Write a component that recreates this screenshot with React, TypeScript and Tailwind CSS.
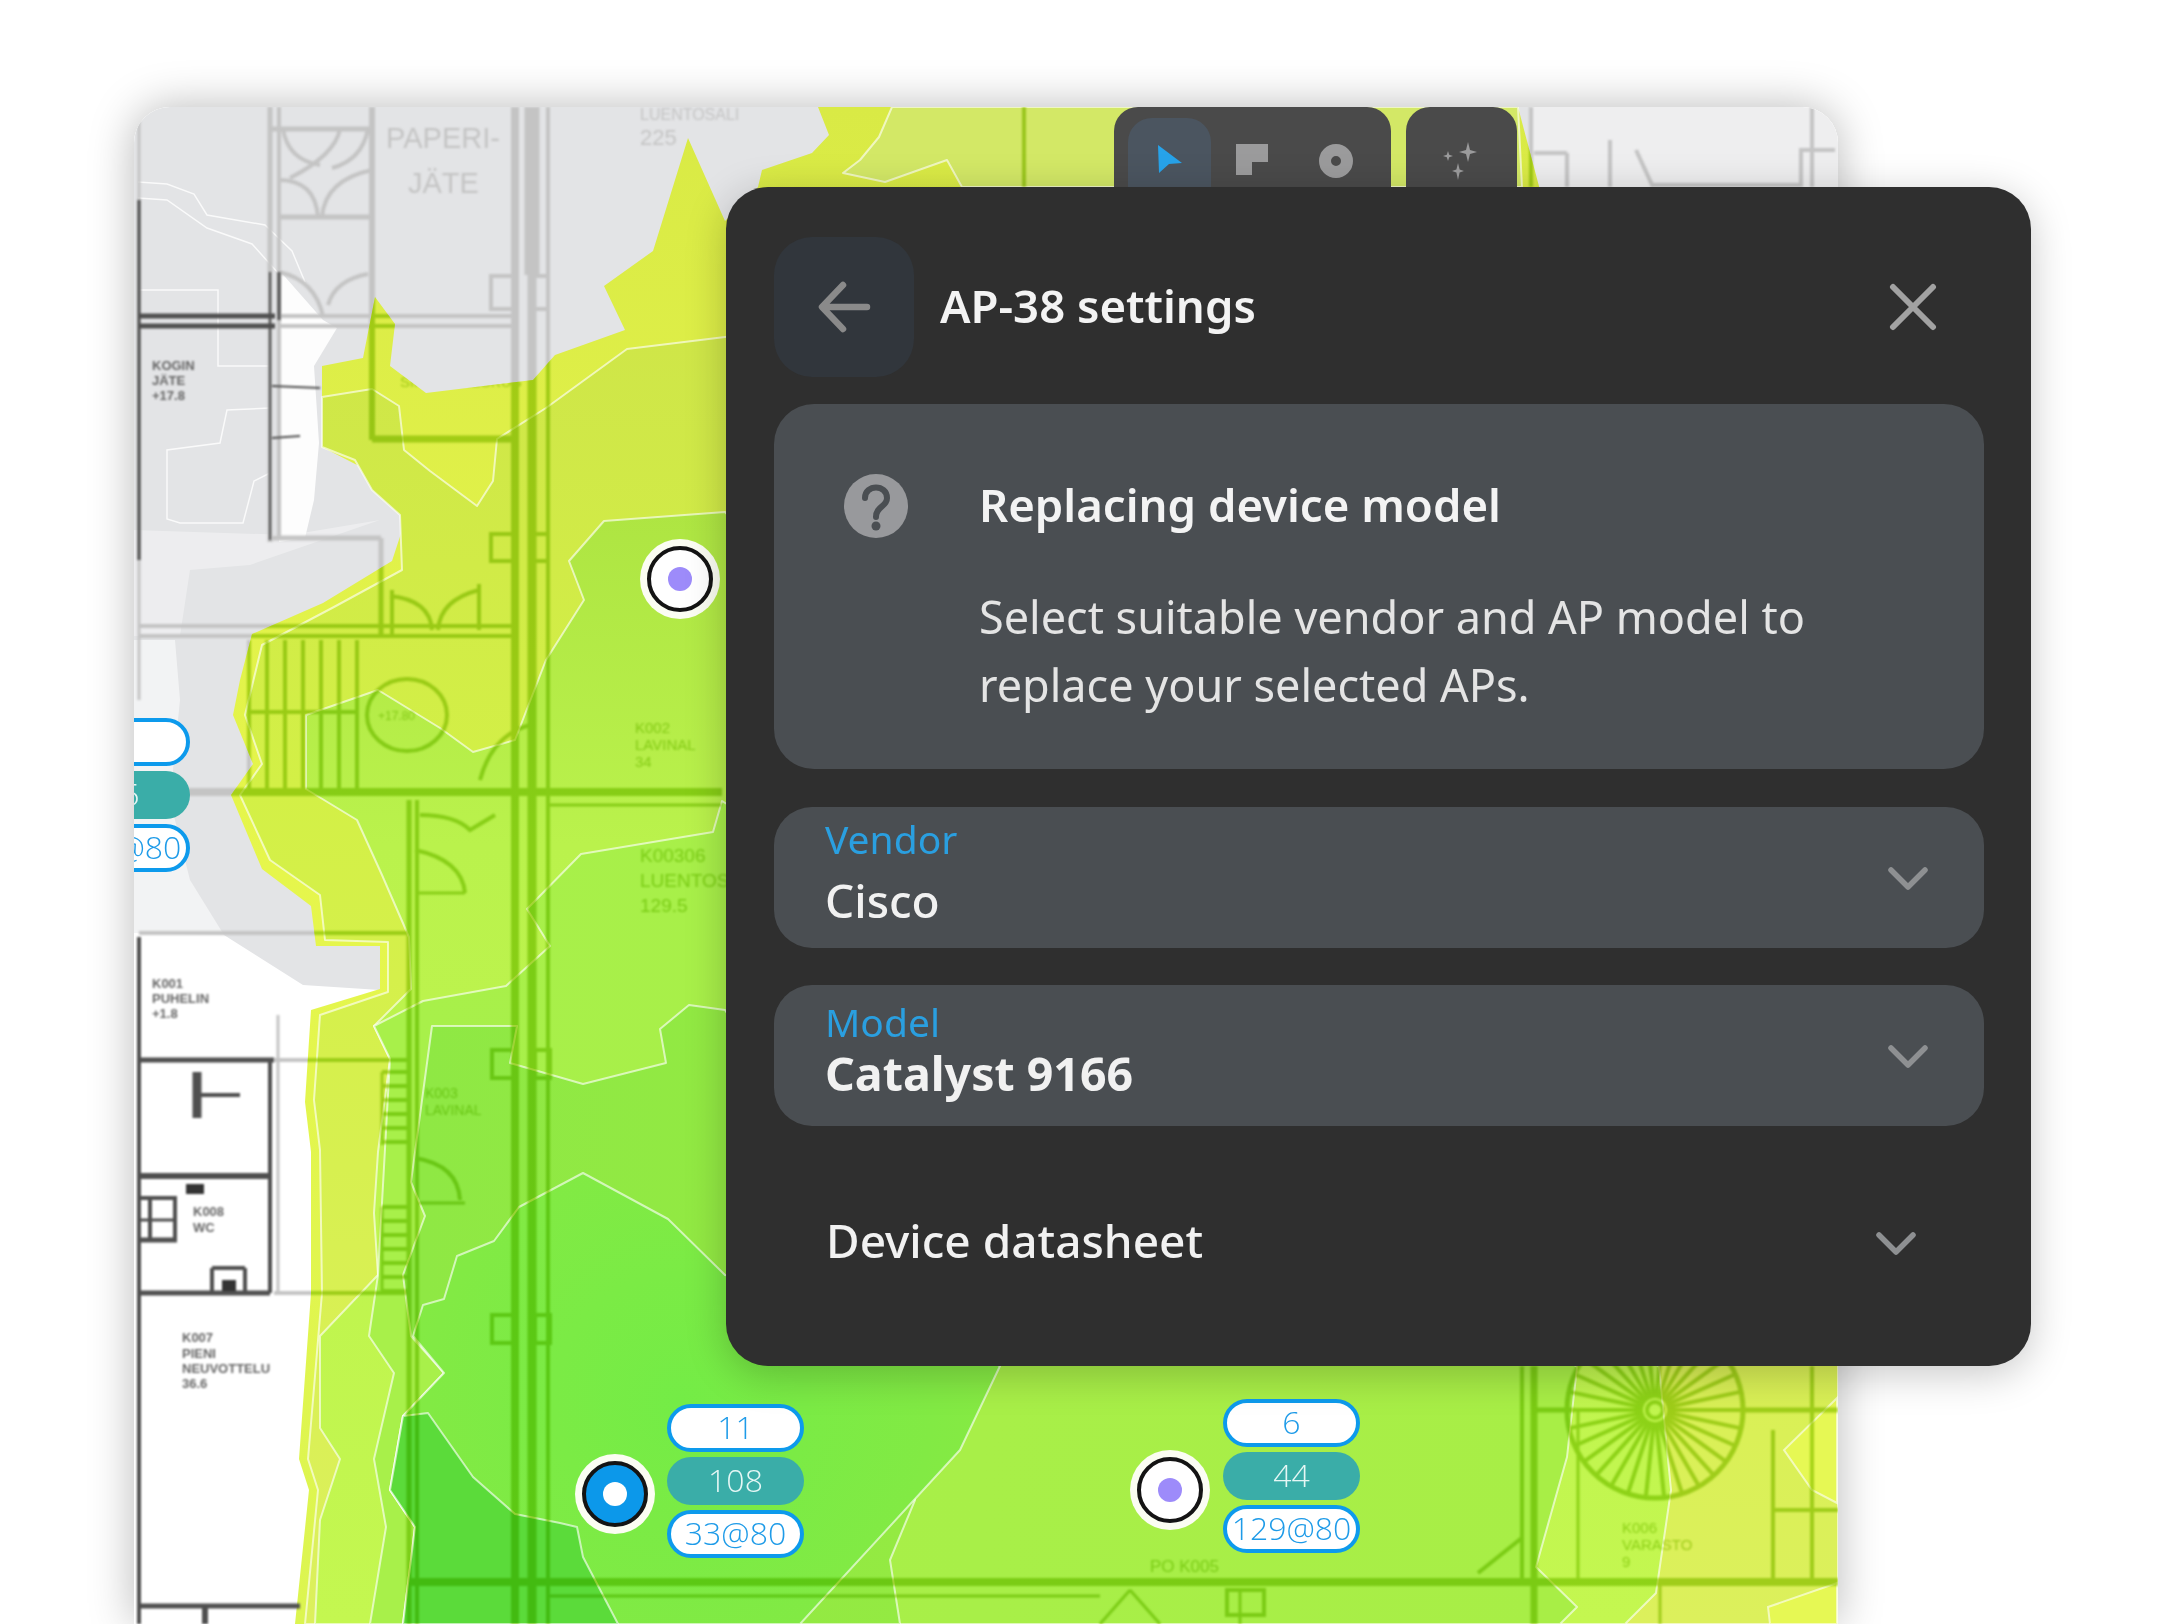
import React from "react";

type Seg = [number, number, number, number, number];

const upperLines: Seg[] = [
  [139, 107, 139, 700, 3], [270, 107, 270, 542, 5], [279, 107, 279, 540, 4], [372, 107, 372, 440, 6],
  [515, 107, 515, 1624, 8], [532, 107, 532, 275, 15], [532, 275, 532, 1624, 9], [548, 107, 548, 1624, 4],
  [270, 129, 372, 129, 5], [279, 217, 372, 217, 5], [279, 316, 515, 316, 4], [279, 326, 515, 326, 4],
  [372, 439, 515, 439, 7], [139, 626, 515, 626, 4], [139, 636, 515, 636, 4], [270, 538, 381, 538, 5], [381, 538, 381, 636, 5],
  [392, 590, 392, 636, 4], [479, 584, 479, 630, 4], [249, 712, 357, 712, 4], [134, 792, 722, 792, 8], [549, 805, 722, 805, 3],
  [1024, 107, 1024, 187, 4], [1531, 107, 1531, 187, 4], [1534, 153, 1567, 153, 4], [1567, 153, 1567, 187, 4],
  [1610, 140, 1610, 187, 4], [1636, 150, 1653, 187, 4], [1799, 150, 1835, 150, 4], [1812, 107, 1812, 187, 4], [1653, 185, 1799, 185, 4], [1801, 150, 1801, 187, 4],
  [139, 933, 411, 933, 4],
  [409, 800, 409, 1624, 5], [417, 800, 417, 1624, 4], [274, 1060, 409, 1060, 4], [278, 1015, 278, 1293, 3], [274, 1293, 409, 1293, 4],
  [415, 893, 465, 893, 3], [415, 1203, 465, 1203, 3], [409, 1582, 1838, 1582, 8], [549, 1596, 1100, 1596, 3],
  [1522, 1366, 1522, 1582, 4], [1534, 1366, 1534, 1624, 7], [1534, 1410, 1574, 1410, 5], [1743, 1410, 1838, 1410, 5],
  [1773, 1430, 1773, 1582, 4], [1812, 1366, 1812, 1582, 4], [1773, 1510, 1838, 1510, 4], [1523, 1537, 1478, 1573, 4],
  [1578, 1410, 1578, 1582, 3], [1240, 1590, 1240, 1624, 3], [1130, 1590, 1100, 1624, 3], [1130, 1590, 1160, 1624, 3],
  [1660, 1582, 1660, 1624, 3],
];

const darkLines: Seg[] = [
  [139, 200, 139, 560, 3], [140, 316, 275, 316, 5], [140, 326, 275, 326, 5], [270, 272, 270, 540, 2], [279, 272, 279, 320, 3],
  [272, 386, 320, 388, 2], [272, 438, 300, 436, 2],
  [139, 937, 139, 1624, 4], [139, 1060, 274, 1060, 5], [270, 1060, 270, 1293, 4], [139, 1176, 270, 1176, 6], [139, 1293, 270, 1293, 5],
  [197, 1072, 197, 1118, 9], [197, 1095, 240, 1095, 4], [139, 1606, 300, 1606, 5], [212, 1268, 212, 1293, 4], [245, 1268, 245, 1293, 4], [212, 1268, 245, 1268, 4],
  [141, 1198, 177, 1198, 4], [141, 1240, 177, 1240, 5], [150, 1198, 150, 1240, 4], [175, 1200, 175, 1238, 4], [141, 1220, 175, 1220, 3],
  [205, 1606, 205, 1624, 6],
];

const boxes = [
  [491, 276, 24, 33], [533, 276, 15, 33], [491, 534, 24, 27], [533, 534, 15, 27],
  [492, 1050, 23, 28], [535, 1050, 15, 28], [492, 1315, 23, 28], [535, 1315, 15, 28], [1227, 1590, 37, 25],
];

const stairs: number[] = [];
for (let x = 249; x <= 357; x += 18) stairs.push(x);
const steps: number[] = [];
for (let y = 1072; y <= 1145; y += 14) steps.push(y);
for (let y = 1207; y <= 1293; y += 14) steps.push(y);
const spokes: number[] = [];
for (let a = 0; a < 360; a += 12) spokes.push(a);

const L0 = "688,138 725,221 758,187 762,170 812,153 829,135 818,107 1518,107 1540,190 1838,400 1838,1624 295,1624 309,1490 299,1459 311,1293 311,1152 305,1102 311,1010 380,989 380,946 316,946 311,906 262,869 231,795 253,764 233,715 240,680 252,634 323,603 392,561 408,512 377,492 359,466 322,447 322,366 363,358 375,297 395,324 390,366 426,393 533,380 555,355 625,330 604,286 653,251";
const L1 = "725,337 627,349 546,408 497,439 493,481 477,506 430,471 404,450 399,406 372,389 322,397 322,447 355,460 372,490 400,515 402,570 334,607 262,645 245,715 262,764 240,795 270,860 320,895 325,940 388,942 388,992 320,1015 314,1100 320,1150 322,1293 308,1459 318,1490 305,1624 1838,1624 1838,1366 1100,300";
const L1T = "892,107 879,137 860,160 843,173 885,182 947,160 962,187 1522,187 1518,107";
const L2 = "725,512 604,521 569,561 584,600 546,660 515,740 473,752 440,728 378,690 306,715 306,789 357,820 382,875 409,937 411,989 374,1026 390,1059 378,1152 374,1213 378,1275 320,1336 320,1428 340,1459 320,1520 315,1624 1625,1624 1656,1593 1671,1490 1659,1367 1200,1000";
const L3 = "722,801 713,832 581,854 527,909 550,946 506,986 423,1001 374,1026 390,1059 378,1275 369,1336 394,1373 374,1459 386,1527 370,1624 1560,1624 1577,1607 1536,1567 1567,1457 1577,1367 1200,1100";
const L4 = "725,1010 689,1005 660,1029 666,1063 583,1084 510,1063 517,1026 432,1026 411,1182 425,1216 403,1275 411,1336 444,1373 403,1416 390,1490 415,1527 403,1624 900,1624 890,1560 915,1500 892,1450 905,1366 850,1200";
const L5 = "725,1275 668,1219 583,1173 519,1207 494,1241 457,1256 444,1299 423,1305 413,1336 444,1373 403,1416 390,1490 415,1527 403,1624 800,1624 960,1450 1000,1366 850,1300";
const L6 = "428,1413 473,1477 515,1514 560,1523 577,1527 583,1557 618,1624 403,1624 415,1527 390,1490 403,1416";

const Heat = ({ points, fill }: { points: string; fill: string }) => (
  <polygon points={points} fill={fill} stroke="rgba(255,255,255,0.62)" strokeWidth={2} strokeLinejoin="round" />
);

type Label = [number, number, number, string];

const greyLabels: Label[] = [
  [386, 148, 29, "PAPERI-"], [408, 193, 29, "JÄTE"], [640, 120, 16, "LUENTOSALI"], [640, 145, 22, "225"],
];

const heatLabels: Label[] = [
  [400, 370, 15, "KOSTE"], [400, 387, 15, "SIIVOUSKESKUS"], [378, 720, 12, "+17.80"],
  [635, 733, 15, "K002"], [635, 750, 15, "LAVINAL"], [635, 767, 15, "34"],
  [640, 862, 19, "K00306"], [640, 887, 19, "LUENTOSALI"], [640, 912, 19, "129.5"],
  [1150, 1572, 17, "PO K005"], [1622, 1533, 15, "K006"], [1622, 1550, 15, "VARASTO"], [1622, 1567, 15, "9"],
  [425, 1098, 14, "K003"], [425, 1115, 14, "LAVINAL"],
];

const darkLabels: [number, number, string][] = [
  [152, 370, "KOGIN"], [152, 385, "JÄTE"], [152, 400, "+17.8"], [152, 988, "K001"], [152, 1003, "PUHELIN"], [152, 1018, "+1.8"],
  [193, 1216, "K008"], [193, 1232, "WC"], [182, 1342, "K007"], [182, 1358, "PIENI"], [182, 1373, "NEUVOTTELU"], [182, 1388, "36.6"],
];

function PlanLines({ stroke, labels }: { stroke: string; labels: Label[] }) {
  return (
    <g fill="none" stroke={stroke} strokeLinecap="butt">
      {upperLines.map(([a, b, c, d, w], i) => (
        <line key={i} x1={a} y1={b} x2={c} y2={d} strokeWidth={w} />
      ))}
      {boxes.map(([x, y, w, h], i) => (
        <rect key={i} x={x} y={y} width={w} height={h} strokeWidth={4} />
      ))}
      <g strokeWidth={4}>
        <path d="M283 129 Q288 160 320 165" />
        <path d="M368 129 Q362 160 332 168" />
        <path d="M279 180 Q315 180 318 217" />
        <path d="M372 170 Q325 180 322 217" />
        <path d="M340 129 Q335 155 290 178" />
        <path d="M279 272 Q315 280 323 316" />
        <path d="M328 305 Q335 280 368 274" />
        <path d="M390 596 Q430 600 432 630" />
        <path d="M479 590 Q440 600 438 630" />
        <path d="M415 850 Q462 860 465 893" />
        <path d="M415 1158 Q458 1165 460 1200" />
        <ellipse cx="407" cy="715" rx="40" ry="36" />
        <path d="M480 780 Q492 735 530 725" />
        <path d="M420 815 Q455 815 470 830 L495 815" />
        <circle cx={1655} cy={1410} r={88} strokeWidth={5} />
        <circle cx={1655} cy={1410} r={8} />
      </g>
      {stairs.map((x) => (
        <line key={x} x1={x} y1={640} x2={x} y2={790} strokeWidth={4} />
      ))}
      {steps.map((y) => (
        <line key={y} x1={382} y1={y} x2={407} y2={y} strokeWidth={4} />
      ))}
      <line x1={382} y1={1072} x2={382} y2={1145} strokeWidth={3} />
      <line x1={382} y1={1207} x2={382} y2={1293} strokeWidth={3} />
      {spokes.map((a) => (
        <line
          key={a}
          x1={1655 + 12 * Math.cos((a * Math.PI) / 180)}
          y1={1410 + 12 * Math.sin((a * Math.PI) / 180)}
          x2={1655 + 86 * Math.cos((a * Math.PI) / 180)}
          y2={1410 + 86 * Math.sin((a * Math.PI) / 180)}
          strokeWidth={4}
        />
      ))}
      {labels.map(([x, y, s, t]) => (
        <text key={t + x + y} x={x} y={y} fontFamily="Liberation Sans" fontSize={s} fill={stroke} stroke="none">
          {t}
        </text>
      ))}
    </g>
  );
}

function FloorMap() {
  return (
    <svg viewBox="134 107 1704 1517" className="block w-full h-full">
      <defs>
        <clipPath id="heatClip">
          <polygon points={L0} />
        </clipPath>
        <linearGradient id="g0" gradientUnits="userSpaceOnUse" x1="0" y1="107" x2="0" y2="1624">
          <stop offset="0" stopColor="#d9ea45" />
          <stop offset="0.5" stopColor="#e6f64c" />
          <stop offset="1" stopColor="#dcf550" />
        </linearGradient>
        <linearGradient id="g1" gradientUnits="userSpaceOnUse" x1="0" y1="340" x2="0" y2="1624">
          <stop offset="0" stopColor="#cfe648" />
          <stop offset="0.35" stopColor="#d3f046" />
          <stop offset="1" stopColor="#dcf05c" />
        </linearGradient>
        <linearGradient id="g2" gradientUnits="userSpaceOnUse" x1="0" y1="510" x2="0" y2="1624">
          <stop offset="0" stopColor="#aee542" />
          <stop offset="0.3" stopColor="#baf24c" />
          <stop offset="1" stopColor="#c4f750" />
        </linearGradient>
        <linearGradient id="g3" gradientUnits="userSpaceOnUse" x1="400" y1="0" x2="1560" y2="0">
          <stop offset="0" stopColor="#a8f04a" />
          <stop offset="1" stopColor="#a8ee46" />
        </linearGradient>
        <linearGradient id="g4" gradientUnits="userSpaceOnUse" x1="420" y1="0" x2="910" y2="0">
          <stop offset="0" stopColor="#8fe844" />
          <stop offset="1" stopColor="#94ea42" />
        </linearGradient>
        <radialGradient id="g5" gradientUnits="userSpaceOnUse" cx="680" cy="1400" r="420">
          <stop offset="0" stopColor="#74ec46" />
          <stop offset="0.6" stopColor="#82ea44" />
          <stop offset="1" stopColor="#8eea42" />
        </radialGradient>
      </defs>

      <rect x="134" y="107" width="1704" height="1517" fill="#ffffff" />
      <polygon points="134,107 1530,107 1838,400 1838,880 380,990 303,985 224,935 134,933" fill="#e3e4e6" />
      <rect x="1530" y="107" width="308" height="100" fill="#eeeeef" />
      <polygon points="279,270 323,320 337,328 314,366 319,443 314,500 305,538 279,542" fill="#ffffff" fillOpacity={0.92} />
      <polygon points="134,530 290,535 380,520 250,565 190,570 180,636 134,636" fill="#ffffff" fillOpacity={0.35} />
      <polygon points="134,640 134,935 224,935 190,880 170,800 180,700 175,640" fill="#ffffff" fillOpacity={0.55} />
      <g fill="none" stroke="rgba(255,255,255,0.8)" strokeWidth={1.5}>
        <polyline points="138,182 167,184 194,194 207,215 265,225 292,251 305,282" />
        <polyline points="138,198 167,200 207,228 252,244 279,274" />
        <polyline points="138,290 218,290 218,366 270,366" />
        <polyline points="270,408 227,410 220,443 167,450 167,519 180,523 243,523 254,481 270,473" />
      </g>

      <g className="blur-[1px]">
        <PlanLines stroke="#c4c4c4" labels={greyLabels} />
      </g>

      <polygon points={L0} fill="url(#g0)" />
      <Heat points={L1} fill="url(#g1)" />
      <Heat points={L1T} fill="#d3e866" />
      <Heat points={L2} fill="url(#g2)" />
      <Heat points={L3} fill="url(#g3)" />
      <Heat points={L4} fill="url(#g4)" />
      <Heat points={L5} fill="url(#g5)" />
      <Heat points={L6} fill="#5bdb3a" />
      <g fill="#e6f854" stroke="rgba(255,255,255,0.6)" strokeWidth={2}>
        <polygon points="1837,1398 1784,1450 1812,1490 1837,1503" />
        <polygon points="1837,1583 1768,1607 1770,1624 1837,1624" />
      </g>

      <g clipPath="url(#heatClip)" className="mix-blend-multiply">
        <g className="blur-[1px]">
          <PlanLines stroke="#bada48" labels={heatLabels} />
        </g>
      </g>

      <g className="blur-[0.8px]" fill="none" stroke="#4f4f4f" strokeLinecap="butt">
        {darkLines.map(([a, b, c, d, w], i) => (
          <line key={i} x1={a} y1={b} x2={c} y2={d} strokeWidth={w} />
        ))}
        <rect x="186" y="1184" width="18" height="10" fill="#333333" stroke="none" />
        <rect x="222" y="1280" width="14" height="11" fill="#333333" stroke="none" />
        {darkLabels.map(([x, y, t]) => (
          <text key={t + y} x={x} y={y} fontFamily="Liberation Sans" fontSize="13" fontWeight="700" fill="#666666" stroke="none">
            {t}
          </text>
        ))}
      </g>
    </svg>
  );
}

function Pills({ a, b, c, className }: { a: string; b: string; c: string; className: string }) {
  const white =
    "flex h-[48px] w-[137px] items-center justify-center rounded-full border-[4px] border-[#0d9aec] bg-white pb-[3px] text-[#1e9be8]";
  return (
    <div className={`absolute flex flex-col gap-[5px] font-['Open_Sans',sans-serif] text-[32px] font-[350] leading-none ${className}`}>
      <div className={white}>{a}</div>
      <div className="flex h-[48px] w-[137px] items-center justify-center rounded-full bg-[#3aada8] pb-[3px] text-[#e6f7f5]">{b}</div>
      <div className={white}>{c}</div>
    </div>
  );
}

function Marker({ active, className }: { active?: boolean; className: string }) {
  return (
    <div className={`absolute flex h-[80px] w-[80px] items-center justify-center rounded-full bg-[#fbfdf2] ${className}`}>
      <div
        className={`flex h-[66px] w-[66px] items-center justify-center rounded-full border-[4px] border-[#141414] ${
          active ? "bg-[#0c98ea]" : "bg-white"
        }`}
      >
        <div className={`h-[24px] w-[24px] rounded-full ${active ? "bg-white" : "bg-[#9d8bfa]"}`} />
      </div>
    </div>
  );
}

const Chevron = () => (
  <svg width="42" height="26" viewBox="0 0 42 26" fill="none">
    <path d="M4 5 L21 22 L38 5" stroke="#8e9092" strokeWidth="5.5" strokeLinecap="round" strokeLinejoin="round" />
  </svg>
);

export default function App() {
  return (
    <div className="relative h-[1624px] w-[2166px] overflow-hidden bg-white pl-[134px] pt-[107px] font-['Noto_Sans',sans-serif]">
      <div className="h-[1517px] w-[1704px] rounded-t-[36px] shadow-[0_0_45px_rgba(0,0,0,0.28)]">
        <div className="relative h-full w-full overflow-hidden rounded-t-[36px]">
          <FloorMap />

          <div className="absolute left-[980px] top-0 flex gap-[15px]">
            <div className="flex h-[80px] w-[277px] gap-[8px] rounded-t-[24px] bg-[#4a4a4a] pl-[14px]">
              <div className="mt-[11px] flex h-[69px] w-[83px] items-start justify-center rounded-t-[24px] bg-[#4b5560] pt-[26px]">
                <svg width="28" height="30" viewBox="0 0 28 30">
                  <polygon points="2,1 26,19 13,20 3,29" fill="#27a3ea" />
                </svg>
              </div>
              <div className="mt-[37px] flex w-[66px] justify-center">
                <svg width="32" height="31" viewBox="0 0 32 31">
                  <polygon points="0,0 32,0 32,18 16,18 16,31 0,31" fill="#9b9b9c" />
                </svg>
              </div>
              <div className="mt-[37px] flex w-[86px] justify-center">
                <svg width="34" height="34" viewBox="0 0 34 34">
                  <circle cx="17" cy="17" r="11" fill="none" stroke="#9b9b9c" strokeWidth="12" />
                </svg>
              </div>
            </div>
            <div className="flex h-[80px] w-[111px] justify-center rounded-t-[24px] bg-[#4a4a4a] pt-[32px]">
              <svg width="44" height="44" viewBox="0 0 44 44" fill="#9b9b9c">
                <path d="M28 3 L30 11 L37 13 L30 15 L28 23 L26 15 L19 13 L26 11 Z" />
                <path d="M8 12 L9.2 15.8 L13 17 L9.2 18.2 L8 22 L6.8 18.2 L3 17 L6.8 15.8 Z" />
                <path d="M18 24 L19.6 30.4 L24 32 L19.6 33.6 L18 41 L16.4 33.6 L12 32 L16.4 30.4 Z" />
              </svg>
            </div>
          </div>

          <Marker className="left-[506px] top-[432px]" />
          <Marker active className="left-[441px] top-[1347px]" />
          <Marker className="left-[996px] top-[1343px]" />
          <Pills a="" b="15" c="129@80" className="-left-[81px] top-[611px]" />
          <Pills a="11" b="108" c="33@80" className="left-[533px] top-[1297px]" />
          <Pills a="6" b="44" c="129@80" className="left-[1089px] top-[1292px]" />
        </div>
      </div>

      <div className="absolute left-[726px] top-[187px] h-[1179px] w-[1305px] rounded-[42px] bg-[#2f2f2f] pl-[48px] pr-[47px] pt-[50px] shadow-[0_8px_40px_rgba(0,0,0,0.22)]">
        <div className="flex h-[140px] items-center">
          <div className="flex h-[140px] w-[140px] items-center justify-center rounded-[38px] bg-[#31363c]">
            <svg width="54" height="52" viewBox="0 0 54 52" fill="none">
              <path d="M50 26 H6 M26 4 L5 26 L26 48" stroke="#8a8a8a" strokeWidth="6.5" strokeLinecap="round" strokeLinejoin="round" />
            </svg>
          </div>
          <h1 className="ml-[26px] -mt-[2px] text-[45.5px] font-semibold leading-none text-[#f3f3f3]">AP-38 settings</h1>
          <svg width="48" height="48" viewBox="0 0 48 48" fill="none" className="ml-auto mr-[47px]">
            <path d="M4 4 L44 44 M44 4 L4 44" stroke="#a2a2a2" strokeWidth="6" strokeLinecap="round" />
          </svg>
        </div>

        <div className="mt-[27px] flex h-[365px] gap-[71px] rounded-[40px] bg-[#4a4e52] pl-[70px] pt-[70px]">
          <svg width="64" height="64" viewBox="0 0 64 64" className="shrink-0">
            <circle cx="32" cy="32" r="32" fill="#98999c" />
            <path d="M21 24 C21 10 43 10 43 24 C43 33 32 32 32 43" fill="none" stroke="#4a4e52" strokeWidth="6" strokeLinecap="round" />
            <circle cx="32" cy="52" r="4.5" fill="#4a4e52" />
          </svg>
          <div className="-mt-[2px]">
            <h2 className="text-[45.5px] font-semibold leading-[64px] text-[#f3f3f3]">Replacing device model</h2>
            <p className="mt-[47px] text-[45px] leading-[68px] text-[#e4e4e4]">
              Select suitable vendor and AP model to
              <br />
              replace your selected APs.
            </p>
          </div>
        </div>

        <div className="mt-[38px] flex flex-col gap-[37px]">
          <div className="flex h-[141px] items-center justify-between rounded-[38px] bg-[#4a4e52] pl-[51px] pr-[55px]">
            <div className="flex h-full flex-col pt-[9px]">
              <span className="text-[39px] leading-[46px] text-[#2a9fe0]">Vendor</span>
              <span className="mt-[10px] text-[46px] font-medium leading-[56px] text-[#f1f1f1]">Cisco</span>
            </div>
            <Chevron />
          </div>
          <div className="flex h-[141px] items-center justify-between rounded-[38px] bg-[#4a4e52] pl-[51px] pr-[55px]">
            <div className="flex h-full flex-col pt-[14px]">
              <span className="text-[39px] leading-[46px] text-[#2a9fe0]">Model</span>
              <span className="mt-[1px] text-[46.5px] font-bold leading-[54px] text-[#f1f1f1]">Catalyst 9166</span>
            </div>
            <Chevron />
          </div>
        </div>

        <div className="mt-[82px] flex items-center justify-between pl-[52px] pr-[67px]">
          <span className="text-[46px] font-medium leading-[64px] text-[#f1f1f1]">Device datasheet</span>
          <div className="mt-[6px] flex">
            <Chevron />
          </div>
        </div>
      </div>
    </div>
  );
}
